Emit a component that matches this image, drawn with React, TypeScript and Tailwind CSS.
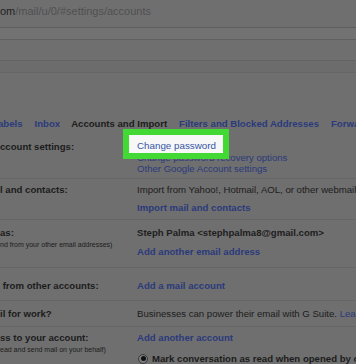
const font = { fontFamily: '"Liberation Sans", Arial, sans-serif' };

function Sep() {
  return <div className="h-px bg-[#666666]" />;
}

export default function App() {
  return (
    <div className="w-[356px] h-[364px] overflow-hidden bg-[#6f6f6f] text-[#1c1c1c] text-[9.6px]" style={font}>
      {/* address bar */}
      <div className="h-[27px] pt-[5px] pl-0 text-[11px] leading-[12px] text-[#4f4f4f] whitespace-nowrap">
        <span className="text-[#222222]">om</span>/mail/u/0/#settings/accounts
      </div>
      <div className="h-px bg-[#5e5e5e]" />
      <div className="h-[11px] bg-[#727272]" />
      <div className="h-px bg-[#606060]" />
      <div className="h-[20px]" />
      <div className="h-px bg-[#636363]" />
      <div className="h-[11px] bg-[#6c6c6c]" />
      <div className="h-px bg-[#666666]" />

      {/* tabs */}
      <div className="h-[45px]" />
      <div className="flex font-bold leading-[11px] h-[11px] whitespace-nowrap">
        <span className="text-[#2b3a7c] -ml-[2px]">abels</span>
        <span className="text-[#2b3a7c] ml-[12px]">Inbox</span>
        <span className="ml-[11px]">Accounts and Import</span>
        <span className="text-[#2b3a7c] ml-[12px]">Filters and Blocked Addresses</span>
        <span className="text-[#2b3a7c] ml-[12px]">Forwarding</span>
      </div>

      {/* change account settings */}
      <div className="grid grid-cols-[137px_1fr] mt-[12px] leading-[11px] whitespace-nowrap">
        <div className="font-bold">ccount settings:</div>
        <div className="text-[#2b3a7c]">
          <div className="relative h-[11px]">
            <div className="absolute left-[-14px] top-[-12px] w-[106px] h-[30px] border-[6px] border-[#43d934] bg-[#f7f7f7] z-10 pl-[8px] pt-[5px] leading-[11px] text-[9.8px] text-[#3556a6]">
              Change password
            </div>
          </div>
          <div>Change password recovery options</div>
          <div>Other Google Account settings</div>
        </div>
      </div>
      <div className="h-[4px]" />
      <Sep />

      {/* import */}
      <div className="grid grid-cols-[137px_1fr] pt-[5px] pb-[6px] leading-[11px] whitespace-nowrap">
        <div className="font-bold">l and contacts:</div>
        <div>
          <div>Import from Yahoo!, Hotmail, AOL, or other webmail</div>
          <div className="mt-[7px] font-bold text-[#2b3a7c]">Import mail and contacts</div>
        </div>
      </div>
      <Sep />

      {/* send mail as */}
      <div className="grid grid-cols-[137px_1fr] pt-[7px] pb-[10px] leading-[11px] whitespace-nowrap">
        <div>
          <div className="font-bold">as:</div>
          <div className="text-[7px] leading-[9px] mt-[2px]">nd from your other email addresses)</div>
        </div>
        <div>
          <div className="font-bold text-[#1e1e1e]">Steph Palma &lt;stephpalma8@gmail.com&gt;</div>
          <div className="mt-[8px] font-bold text-[#2b3a7c]">Add another email address</div>
        </div>
      </div>
      <Sep />

      {/* check mail */}
      <div className="grid grid-cols-[137px_1fr] pt-[12px] pb-[9px] leading-[11px] whitespace-nowrap">
        <div className="font-bold">&nbsp;from other accounts:</div>
        <div className="font-bold text-[#2b3a7c]">Add a mail account</div>
      </div>
      <Sep />

      {/* work */}
      <div className="grid grid-cols-[137px_1fr] pt-[7px] pb-[7px] leading-[11px] whitespace-nowrap">
        <div className="font-bold">il for work?</div>
        <div>
          Businesses can power their email with G Suite. <span className="text-[#2b3a7c]">Learn more</span>
        </div>
      </div>
      <Sep />

      {/* grant access */}
      <div className="grid grid-cols-[137px_1fr] pt-[5px] leading-[11px] whitespace-nowrap">
        <div>
          <div className="font-bold">ss to your account:</div>
          <div className="text-[7px] leading-[9px] mt-[2px]">ead and send mail on your behalf)</div>
        </div>
        <div>
          <div className="font-bold text-[#2b3a7c]">Add another account</div>
          <div className="flex items-center mt-[10px]">
            <span className="w-[10px] h-[10px] rounded-full border border-[#3a3a3a] bg-[#7e7e7e] flex items-center justify-center ml-[1px]">
              <span className="w-[5px] h-[5px] rounded-full bg-[#111111]" />
            </span>
            <span className="ml-[4px] font-bold">Mark conversation as read when opened by others</span>
          </div>
        </div>
      </div>
    </div>
  );
}
